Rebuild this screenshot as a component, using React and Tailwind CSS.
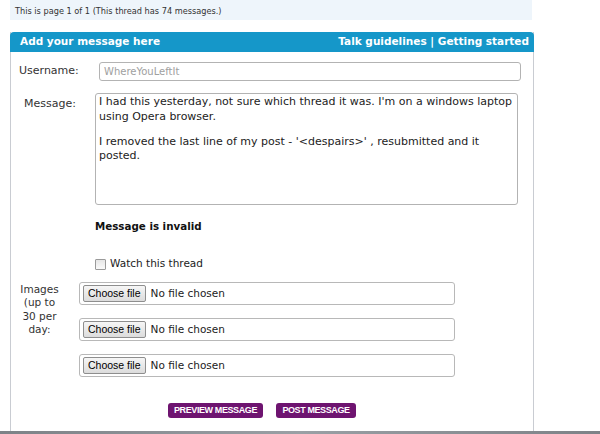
export default function App() {
  const font = { fontFamily: '"DejaVu Sans", Verdana, sans-serif' };
  const FileRow = () => (
    <div className="w-[376px] h-[23px] border border-[#b8b8b8] rounded-[3px] flex items-center pl-[3px] gap-[5px] bg-white">
      <button
        className="h-[17px] px-[4px] border border-[#8e8e8e] rounded-[2px] bg-gradient-to-b from-[#f6f6f6] to-[#dcdcdc] text-[10.5px] leading-none text-black"
        style={{ fontFamily: '"Liberation Sans", Arial, sans-serif' }}
      >
        Choose file
      </button>
      <span className="text-[10.5px] text-[#222]">No file chosen</span>
    </div>
  );
  return (
    <div className="w-[600px] h-[434px] bg-white flex flex-col overflow-hidden" style={font}>
      <div className="ml-[10px] w-[522px] h-[20px] bg-[#eef5fb] flex items-end pl-[5px] pb-[3px]">
        <span className="text-[8.2px] text-[#333]">This is page 1 of 1 (This thread has 74 messages.)</span>
      </div>
      <div className="ml-[10px] mt-[12px] w-[524px] flex-1 flex flex-col border-x border-[#c9ccd2]">
        <div className="h-[20px] -mx-px bg-[#1597c9] rounded-t-[4px] flex items-center justify-between pl-[10px] pr-[5px] text-white font-bold text-[10.5px]">
          <span>Add your message here</span>
          <span>Talk guidelines | Getting started</span>
        </div>
        <div className="flex-1 flex flex-col">
          <div className="flex items-center mt-[10px]">
            <span className="w-[88px] pl-[8px] text-[11px] text-[#333]">Username:</span>
            <div className="w-[422px] h-[19px] border border-[#b3b3b3] rounded-[3px] flex items-center pl-[4px] text-[10px] text-[#a0a0a0]">
              WhereYouLeftIt
            </div>
          </div>
          <div className="flex mt-[12px]">
            <span className="w-[84px] pl-[13px] pt-[3px] text-[11px] text-[#333]">Message:</span>
            <div className="w-[423px] h-[112px] border border-[#b3b3b3] rounded-[3px] px-[3px] pt-[1px] text-[11px] leading-[14.5px] text-[#222]">
              <p>I had this yesterday, not sure which thread it was. I'm on a windows laptop using Opera browser.</p>
              <p className="mt-[10.5px]">I removed the last line of my post - '&lt;despairs&gt;' , resubmitted and it posted.</p>
            </div>
          </div>
          <div className="ml-[84px] mt-[14px] text-[10.3px] font-bold text-[#111]">Message is invalid</div>
          <div className="ml-[84px] mt-[22px] flex items-center gap-[4px]">
            <span className="w-[11px] h-[11px] border border-[#9a9a9a] bg-gradient-to-b from-[#e6e6e6] to-[#fafafa] rounded-[1px]" />
            <span className="text-[10.5px] text-[#222]">Watch this thread</span>
          </div>
          <div className="flex mt-[10px]">
            <div className="w-[57px] text-center text-[10.5px] leading-[13.3px] text-[#333] pt-px">
              Images<br />(up to<br />30 per<br />day:
            </div>
            <div className="ml-[11px] flex flex-col gap-[13px]">
              <FileRow />
              <FileRow />
              <FileRow />
            </div>
          </div>
          <div className="flex gap-[13px] ml-[157px] mt-[26px]" style={{ fontFamily: '"Liberation Sans", Arial, sans-serif' }}>
            <button className="h-[15px] w-[95px] bg-[#6e1470] rounded-[3px] text-white font-bold text-[9px] tracking-[-0.4px]">PREVIEW MESSAGE</button>
            <button className="h-[15px] w-[80px] bg-[#6e1470] rounded-[3px] text-white font-bold text-[9px] tracking-[-0.4px]">POST MESSAGE</button>
          </div>
        </div>
      </div>
      <div className="h-[3px] bg-gradient-to-r from-[#7d8287] via-[#9aa0a5] to-[#7d8287]" />
    </div>
  );
}
